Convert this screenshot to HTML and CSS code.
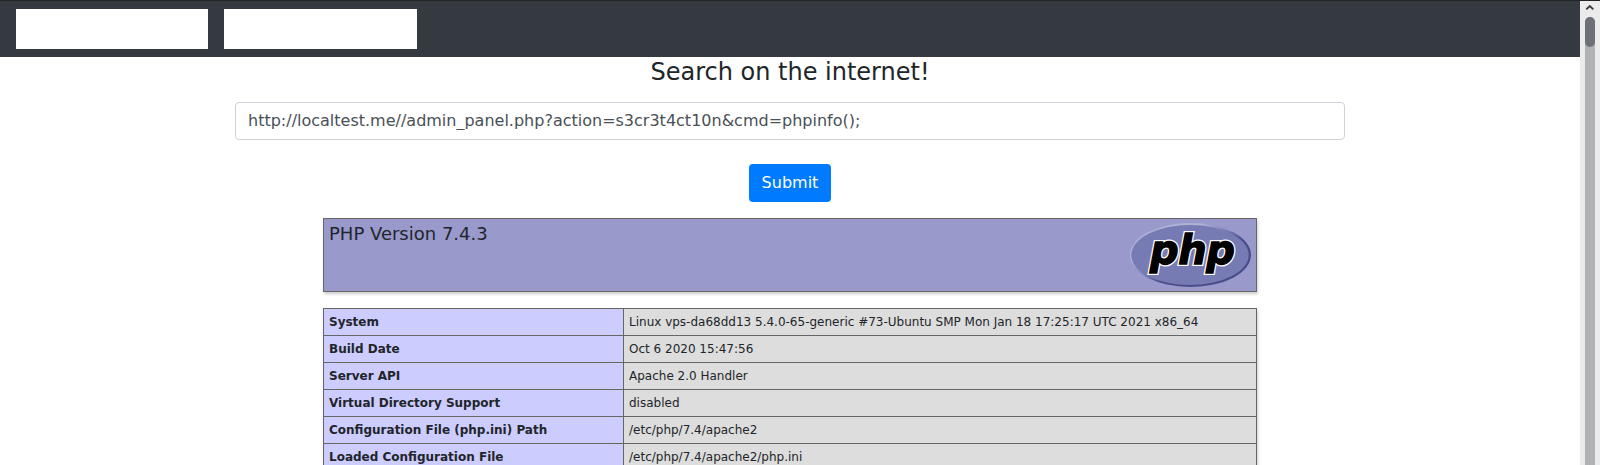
FILE: index.html
```html
<!DOCTYPE html>
<html lang="en">
<head>
<meta charset="utf-8">
<title>Search on the internet!</title>
<link rel="stylesheet" href="styles.css">
</head>
<body>
<div class="window">
  <div class="page">
    <nav class="navbar"><div class="nav-block"></div><div class="nav-block last"></div></nav>
    <main class="container">
      <h4 class="title">Search on the internet!</h4>
      <input class="field" type="text" value="http://localtest.me//admin_panel.php?action=s3cr3t4ct10n&amp;cmd=phpinfo();">
      <button class="submit">Submit</button>
      <section class="banner">
        <h1 class="version">PHP Version 7.4.3</h1>
        <svg class="logo" width="121" height="64" viewBox="0 0 121 64">
          <defs>
            <linearGradient id="rim" x1="0.1" y1="0.1" x2="0.9" y2="0.9">
              <stop offset="0" stop-color="#aeb2d5"/>
              <stop offset="0.25" stop-color="#aeb2d5"/>
              <stop offset="0.46" stop-color="#777bb3"/>
              <stop offset="0.62" stop-color="#484c89"/>
              <stop offset="1" stop-color="#484c89"/>
            </linearGradient>
            <text id="word" class="logo-text" x="20" y="40.5" textLength="85">php</text>
          </defs>
          <ellipse cx="60.5" cy="32" rx="60.5" ry="32" fill="url(#rim)"/>
          <ellipse cx="60" cy="32" rx="58.7" ry="30" fill="#777bb3"/>
          <use class="logo-outline" href="#word"/>
          <use class="logo-fill" href="#word"/>
        </svg>
      </section>
      <table class="info">
        <tr><th>System</th><td>Linux vps-da68dd13 5.4.0-65-generic #73-Ubuntu SMP Mon Jan 18 17:25:17 UTC 2021 x86_64</td></tr>
        <tr><th>Build Date</th><td>Oct 6 2020 15:47:56</td></tr>
        <tr><th>Server API</th><td>Apache 2.0 Handler</td></tr>
        <tr><th>Virtual Directory Support</th><td>disabled</td></tr>
        <tr><th>Configuration File (php.ini) Path</th><td>/etc/php/7.4/apache2</td></tr>
        <tr><th>Loaded Configuration File</th><td>/etc/php/7.4/apache2/php.ini</td></tr>
      </table>
    </main>
  </div>
  <div class="scrollbar">
    <svg class="arrow" width="20" height="16" viewBox="0 0 20 16"><path d="M6.3 8.3 9.8 5l3.5 3.3" fill="none" stroke="#35383c" stroke-width="1.8"/></svg>
    <div class="track"><div class="thumb"></div></div>
  </div>
</div>
</body>
</html>
```

FILE: styles.css
```css
* { box-sizing: border-box; }
body {
  margin: 0;
  overflow: hidden;
  background: #fff;
  color: #212529;
  font: 16px/1.5 "DejaVu Sans", sans-serif;
}
.window {
  display: flex;
  height: 465px;
  overflow: hidden;
  border-top: 1px solid #232323;
}
.page { width: 1580px; height: 464px; overflow: hidden; }
.navbar {
  display: flex;
  gap: 16px;
  height: 56px;
  padding: 8px 16px;
  background: #343a40;
}
.nav-block { width: 192px; height: 40px; background: #fff; }
.last { width: 193px; }
.container {
  display: flex;
  flex-direction: column;
  align-items: center;
  width: 1110px;
  margin: 0 auto;
}
.title { margin: 0 0 14px; font-size: 24px; font-weight: 400; line-height: 31px; }
.field {
  width: 100%;
  height: 38px;
  padding: 5px 12px 7px;
  border: 1px solid #ced4da;
  border-radius: 4px;
  background: #fff;
  color: #495057;
  font: inherit;
}
.submit {
  width: 82px;
  height: 38px;
  margin: 24px 0 16px;
  padding: 0;
  border: 0;
  border-radius: 4px;
  background: #007bff;
  color: #fff;
  font: inherit;
}
.banner {
  display: flex;
  flex-shrink: 0;
  justify-content: space-between;
  width: 934px;
  height: 74px;
  margin-bottom: 16px;
  padding: 4px 5px;
  border: 1px solid #666;
  background: #99c;
  box-shadow: 1px 2px 3px #ccc;
}
.version { margin: 0; font-size: 18px; font-weight: 400; line-height: 22px; }
.logo-text {
  stroke-linejoin: miter;
  font: italic bold 40px "DejaVu Sans", sans-serif;
}
.logo-outline { fill: #fff; stroke: #fff; stroke-width: 4px; }
.logo-fill { fill: #000; stroke: #000; stroke-width: 1.4px; }
.info {
  width: 934px;
  table-layout: fixed;
  border-collapse: collapse;
  box-shadow: 1px 2px 3px #ccc;
  font-size: 12px;
  line-height: 18px;
}
.info th, .info td {
  height: 27px;
  padding: 4px 5px;
  border: 1px solid #666;
  text-align: left;
  white-space: nowrap;
}
.info th { width: 300px; background: #ccf; }
.info td { background: #ddd; }
.scrollbar {
  display: flex;
  flex-direction: column;
  align-items: center;
  width: 20px;
  background: #ebebeb;
}
.arrow { flex-shrink: 0; }
.track { flex: 1; width: 10px; border-radius: 5px 5px 0 0; background: #b1b2b4; }
.thumb { height: 30px; border-radius: 5px; background: #6d7075; }
```
